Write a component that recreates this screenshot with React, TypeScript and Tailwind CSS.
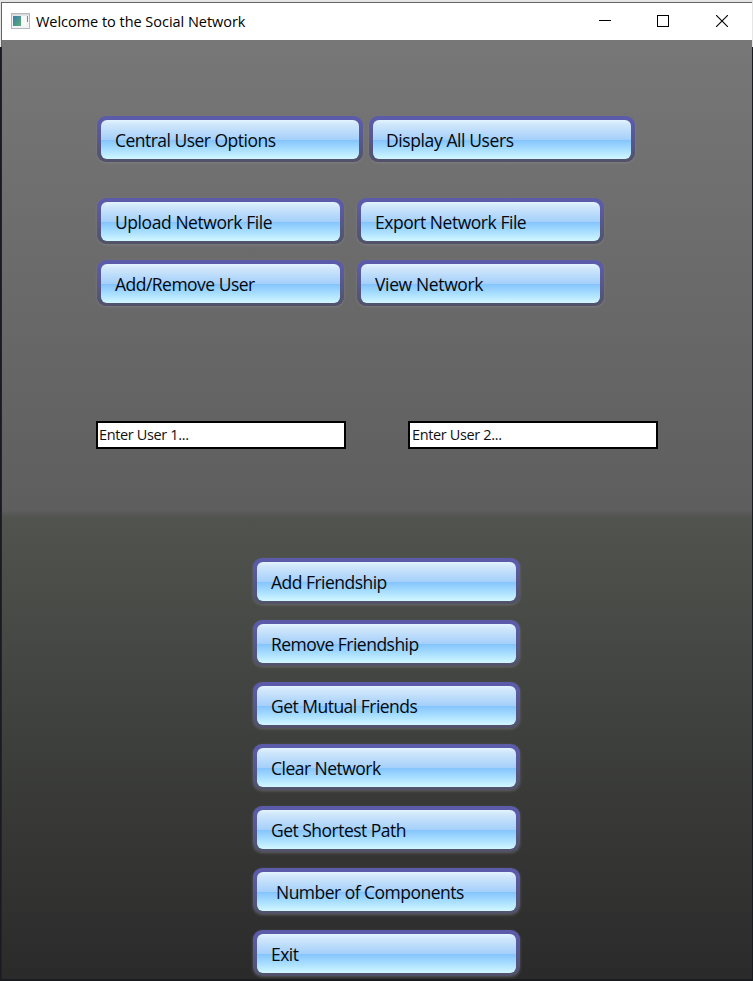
import React from "react";

type ButtonProps = { label: string; width: string; tracking?: string; indent?: string };

function GlossyButton({ label, width, tracking = "tracking-[-0.52px]", indent = "pl-[14px]" }: ButtonProps) {
  return (
    <button
      className={`${width} block h-[46px] shrink-0 rounded-[9px] bg-gradient-to-b from-[#5b5ba9] from-15% to-[#515268] px-[4px] pt-[4px] pb-[3px] text-left shadow-[0_1px_3px_rgba(145,145,145,0.45)]`}
    >
      <span
        className={`${indent} ${tracking} block h-[39px] rounded-[6px] bg-[linear-gradient(180deg,#e2f4ff_0%,#cfe6fb_12%,#a5d0fa_50%,#85c4fc_52%,#a5dcff_74%,#d2f8ff_100%)] text-[17.5px] leading-[41px] whitespace-nowrap text-[#05080c]`}
      >
        {label}
      </span>
    </button>
  );
}

function UserField({ initial, indent }: { initial: string; indent: string }) {
  return (
    <div
      className={`${indent} h-[28px] w-[250px] border-2 border-black bg-white text-[14.5px] leading-[23px] tracking-[-0.36px] text-[#111]`}
    >
      {initial}
    </div>
  );
}

function TitleBar() {
  return (
    <header className="flex h-[37px] items-center bg-white pl-[9px]">
      <svg width="19" height="16" viewBox="0 0 19 16" className="-mt-px shrink-0">
        <rect x="0.5" y="0.5" width="18" height="15" fill="#f1f3f5" stroke="#b4b9bf" />
        <rect x="1" y="1" width="17" height="1.5" fill="#d5d9de" />
        <rect x="2" y="3" width="8" height="10" fill="url(#preview)" />
        <rect x="11" y="3" width="4" height="10" fill="#f8f8f8" />
        <rect x="16" y="3" width="1" height="6" fill="#55a477" />
        <defs>
          <linearGradient id="preview" x1="0" y1="0" x2="1" y2="1">
            <stop offset="0" stopColor="#3f79a8" />
            <stop offset="1" stopColor="#58b078" />
          </linearGradient>
        </defs>
      </svg>
      <span className="ml-[6px] text-[14.5px] leading-5 tracking-[-0.03px] text-black">Welcome to the Social Network</span>
      <div className="-mt-[2px] mr-[24px] ml-auto flex gap-[46px]">
        <svg width="12" height="12" viewBox="0 0 12 12" shapeRendering="crispEdges">
          <path d="M0 5.5H12" stroke="#000" />
        </svg>
        <svg width="12" height="12" viewBox="0 0 12 12" shapeRendering="crispEdges" className="mr-px">
          <rect x="0.5" y="0.5" width="11" height="11" fill="none" stroke="#000" />
        </svg>
        <svg width="12" height="12" viewBox="0 0 12 12">
          <path d="M0 0L12 12M12 0L0 12" stroke="#000" strokeWidth="1.1" />
        </svg>
      </div>
    </header>
  );
}

const actions = [
  { label: "Add Friendship" },
  { label: "Remove Friendship" },
  { label: "Get Mutual Friends" },
  { label: "Clear Network" },
  { label: "Get Shortest Path" },
  { label: "Number of Components", indent: "pl-[19px]" },
  { label: "Exit" },
];

export default function App() {
  return (
    <div className="flex h-[981px] w-[753px] flex-col overflow-hidden bg-[linear-gradient(180deg,#e5e5e5_47px,#181c20_47px)] pt-[2px] font-['Open_Sans','Noto_Sans',sans-serif]">
      <div className="mx-px flex h-[977px] flex-col border-t border-[#646464] bg-[linear-gradient(180deg,#646464_44px,#202427_44px)] pl-px">
        <TitleBar />
        <main className="h-[939px] bg-[linear-gradient(180deg,#777777_0px,#5e5e5e_470px,#50534e_478px,#2a2a2a_939px)] pt-[76px]">
          <div className="ml-[95px] flex gap-[6px]">
            <GlossyButton label="Central User Options" width="w-[266px]" />
            <GlossyButton label="Display All Users" width="w-[266px]" indent="pl-[13px]" tracking="tracking-[-0.4px]" />
          </div>
          <div className="mt-[36px] ml-[95px] grid w-[507px] grid-cols-[247px_247px] gap-x-[13px] gap-y-[16px]">
            <GlossyButton label="Upload Network File" width="w-[247px]" tracking="tracking-[-0.43px]" />
            <GlossyButton label="Export Network File" width="w-[247px]" tracking="tracking-[-0.46px]" />
            <GlossyButton label="Add/Remove User" width="w-[247px]" />
            <GlossyButton label="View Network" width="w-[247px]" tracking="tracking-[-0.36px]" />
          </div>
          <div className="mt-[115px] ml-[94px] flex gap-[62px]">
            <UserField initial="Enter User 1..." indent="pl-px" />
            <UserField initial="Enter User 2..." indent="pl-[2px]" />
          </div>
          <div className="mt-[109px] ml-[251px] flex flex-col gap-[16px]">
            {actions.map((action) => (
              <GlossyButton key={action.label} width="w-[267px]" {...action} />
            ))}
          </div>
        </main>
      </div>
    </div>
  );
}
